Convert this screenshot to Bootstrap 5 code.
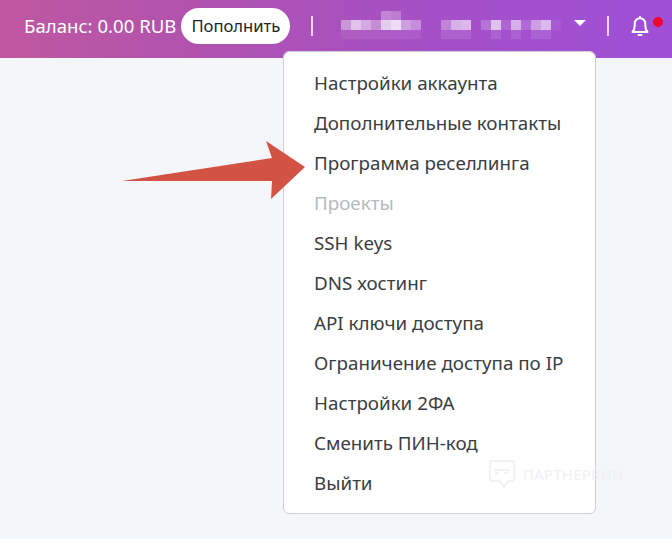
<!DOCTYPE html>
<html lang="ru">
<head>
  <meta charset="UTF-8" />
  <meta name="viewport" content="width=device-width, initial-scale=1.0"/>
  <title>Аккаунт</title>
  <link href="https://cdn.jsdelivr.net/npm/bootstrap@5.3.0/dist/css/bootstrap.min.css" rel="stylesheet"/>
  <style>
    html, body {
      height: 539px;
      overflow: hidden;
    }
    body {
      background-color: #f5f6f9;
      font-family: "Noto Sans", sans-serif;
      position: relative;
    }
    .top-bar {
      height: 58px;
      background: linear-gradient(90deg, #bf58a0 0%, #b052ae 30%, #a550c8 65%, #9f50d8 100%);
      color: #fff;
      font-size: 18.6px;
      padding: 0 0 6px 24px;
    }
    .balance-btn {
      background: #fff;
      color: #212529;
      font-size: 16.6px;
      height: 36px;
      line-height: 36px;
      width: 109px;
      padding: 0;
      border: 0;
      border-radius: 18px;
      margin-left: 5px;
    }
    .bar-sep {
      width: 2px;
      height: 20px;
      background: rgba(255,255,255,.75);
    }
    .sep-one { margin-left: 21px; }
    .name-blur { margin-left: 28px; margin-top: 11px; }
    .caret-down {
      width: 0;
      height: 0;
      border-left: 6px solid transparent;
      border-right: 6px solid transparent;
      border-top: 6px solid #fff;
      margin-left: 13px;
      margin-bottom: 6px;
    }
    .sep-two { margin-left: 21px; }
    .bell-wrap { margin-left: 21px; position: relative; width: 20px; height: 22px; }
    .bell-dot {
      position: absolute;
      top: 2px;
      left: 23px;
      width: 10px;
      height: 10px;
      border-radius: 50%;
      background: #f5022e;
    }
    .account-menu {
      position: absolute;
      top: 51px;
      left: 283px;
      width: 313px;
      height: 463px;
      padding: 11px 0 0;
      margin: 0;
      display: block;
      border-color: #d0d1d4;
      border-radius: 6px;
    }
    .account-menu .dropdown-item {
      font-size: 18.8px;
      line-height: 40px;
      padding: 0 30px;
      color: #3a3d42;
    }
    .account-menu .dropdown-item.disabled {
      color: #b5bac1;
    }
    .red-arrow {
      position: absolute;
      left: 120px;
      top: 140px;
      z-index: 1001;
    }
    .watermark {
      position: absolute;
      left: 489px;
      top: 460px;
      z-index: 1001;
      color: #eff0f3;
      font-size: 15px;
      letter-spacing: .2px;
    }
  </style>
</head>
<body>

<!-- Top bar -->
<div class="top-bar d-flex align-items-center">
  <span>Баланс: 0.00 RUB</span>
  <button class="balance-btn" type="button">Пополнить</button>
  <span class="bar-sep sep-one"></span>
  <svg class="name-blur align-self-start" width="220" height="28" viewBox="0 0 220 28">
    <g fill="#fff">
      <rect x="40" y="0" width="10" height="9" opacity=".3"/>
      <rect x="50" y="0" width="10" height="9" opacity=".25"/>
      <rect x="0" y="9" width="10" height="10" opacity=".4"/>
      <rect x="10" y="9" width="10" height="10" opacity=".65"/>
      <rect x="20" y="9" width="10" height="10" opacity=".5"/>
      <rect x="30" y="9" width="10" height="10" opacity=".35"/>
      <rect x="40" y="9" width="10" height="10" opacity=".7"/>
      <rect x="50" y="9" width="10" height="10" opacity=".8"/>
      <rect x="60" y="9" width="10" height="10" opacity=".45"/>
      <rect x="70" y="9" width="10" height="10" opacity=".35"/>
      <rect x="100" y="9" width="10" height="10" opacity=".3"/>
      <rect x="110" y="9" width="10" height="10" opacity=".55"/>
      <rect x="120" y="9" width="10" height="10" opacity=".6"/>
      <rect x="140" y="9" width="10" height="10" opacity=".2"/>
      <rect x="150" y="9" width="10" height="10" opacity=".65"/>
      <rect x="160" y="9" width="10" height="10" opacity=".12"/>
      <rect x="170" y="9" width="10" height="10" opacity=".55"/>
      <rect x="180" y="9" width="10" height="10" opacity=".15"/>
      <rect x="190" y="9" width="10" height="10" opacity=".45"/>
      <rect x="200" y="9" width="10" height="10" opacity=".6"/>
      <rect x="210" y="9" width="10" height="10" opacity=".06"/>
      <rect x="0" y="19" width="80" height="9" opacity=".07"/>
      <rect x="100" y="19" width="30" height="9" opacity=".1"/>
      <rect x="150" y="19" width="10" height="9" opacity=".1"/>
      <rect x="170" y="19" width="10" height="9" opacity=".1"/>
      <rect x="190" y="19" width="20" height="9" opacity=".1"/>
    </g>
  </svg>
  <span class="caret-down"></span>
  <span class="bar-sep sep-two"></span>
  <span class="bell-wrap">
    <svg class="d-block" width="20" height="22" viewBox="0 0 20 22" fill="none" stroke="#fff" stroke-width="2" stroke-linejoin="round" stroke-linecap="round">
      <path d="M2.500 17c1.500-1.500 2.200-3 2.200-6.500V8.500a5.300 5.300 0 0 1 10.600 0v2c0 3.500.7 5 2.200 6.500z"/>
      <path d="M10 2v1M8.500 20h3"/>
    </svg>
    <span class="bell-dot"></span>
  </span>
</div>

<!-- Account menu -->
<ul class="dropdown-menu account-menu">
  <li><a class="dropdown-item" href="#">Настройки аккаунта</a></li>
  <li><a class="dropdown-item" href="#">Дополнительные контакты</a></li>
  <li><a class="dropdown-item" href="#">Программа реселлинга</a></li>
  <li><a class="dropdown-item disabled" href="#">Проекты</a></li>
  <li><a class="dropdown-item" href="#">SSH keys</a></li>
  <li><a class="dropdown-item" href="#">DNS хостинг</a></li>
  <li><a class="dropdown-item" href="#">API ключи доступа</a></li>
  <li><a class="dropdown-item" href="#">Ограничение доступа по IP</a></li>
  <li><a class="dropdown-item" href="#">Настройки 2ФА</a></li>
  <li><a class="dropdown-item" href="#">Сменить ПИН-код</a></li>
  <li><a class="dropdown-item" href="#">Выйти</a></li>
</ul>

<!-- Annotation arrow -->
<svg class="red-arrow" width="190" height="62" viewBox="120 140 190 62">
  <polygon points="122,181 272,158 266,141 305,167 271,199 272,181" fill="#d25244"/>
</svg>

<!-- Watermark -->
<div class="watermark d-flex align-items-center gap-2">
  <svg width="26" height="28" viewBox="0 0 26 28" fill="none" stroke="#eceef1" stroke-width="1.500">
    <path d="M2 1h22a1 1 0 0 1 1 1v18a1 1 0 0 1-1 1h-5l-4 6-4-6H2a1 1 0 0 1-1-1V2a1 1 0 0 1 1-1z"/>
    <path d="M5 10h16M6 13h4M15 13h4"/>
  </svg>
  <span>ПАРТНЕРКИН</span>
</div>

<script src="https://cdn.jsdelivr.net/npm/bootstrap@5.3.0/dist/js/bootstrap.bundle.min.js"></script>
</body>
</html>
